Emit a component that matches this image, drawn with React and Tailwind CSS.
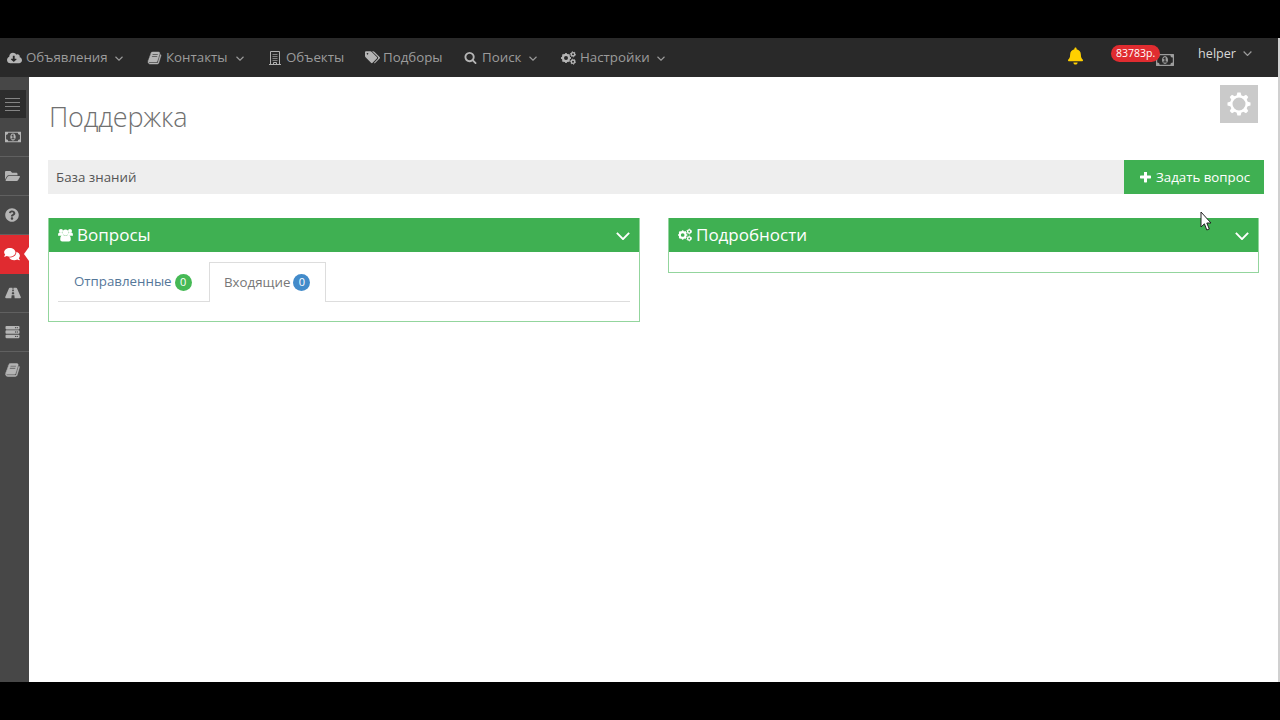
import React from "react";
import {
  FaCloudDownloadAlt,
  FaBell,
  FaFolderOpen,
  FaQuestionCircle,
  FaComments,
  FaRoad,
  FaServer,
} from "react-icons/fa";

function Chevron({ className }) {
  return (
    <svg viewBox="0 0 16 9" fill="none" stroke="currentColor" className={className}>
      <path d="M1 1l7 7 7-7" strokeWidth="2.200" />
    </svg>
  );
}

function Book({ className }) {
  return (
    <svg viewBox="0 0 1792 1792" fill="currentColor" stroke="currentColor" strokeWidth="60" className={className}>
      <path d="M1703 478q40 57 18 129l-275 906q-19 64-76.5 107.5t-122.5 43.5h-923q-77 0-148.5-53.5t-99.5-131.5q-24-67-2-127 0-4 3-27t4-37q1-8-3-21.5t-3-19.5q2-11 8-21t16.5-23.5 16.5-23.5q23-38 45-91.5t30-91.5q3-10 .5-30t-.5-28q3-11 17-28t17-23q21-36 42-92t25-90q1-9-2.5-32t.5-28q4-13 22-30.5t22-22.5q19-26 42.5-84.5t27.5-96.5q1-8-3-25.5t-2-26.5q2-8 9-18t18-23 17-21q8-12 16.5-30.5t15-35 16-36 19.5-32 26.5-23.5 36-11.5 47.5 5.5l-1 3q38-9 51-9h761q74 0 114 56t18 130l-274 906q-36 119-71.5 153.5t-128.5 34.5h-869q-27 0-38 15-11 16-1 43 24 70 144 70h923q29 0 56-15.5t35-41.5l300-987q7-22 5-57 38 15 59 43zm-1064 2q-4 13 2 22.5t20 9.5h608q13 0 25.5-9.5t16.5-22.5l21-64q4-13-2-22.5t-20-9.5h-608q-13 0-25.5 9.5t-16.5 22.5zm-83 256q-4 13 2 22.5t20 9.5h608q13 0 25.5-9.5t16.5-22.5l21-64q4-13-2-22.5t-20-9.5h-608q-13 0-25.5 9.5t-16.5 22.5z" />
    </svg>
  );
}

function Money({ className }) {
  return (
    <svg viewBox="0 256 1920 1280" fill="currentColor" className={className}>
      <path d="M768 1152h384v-96h-128v-448h-114l-148 137 77 80q42-37 55-57h2v288h-128v96zm512-256q0 70-21 142t-59.5 134-101.5 101-138 39-138-39-101.5-101-59.5-134-21-142 21-142 59.5-134 101.5-101 138-39 138 39 101.5 101 59.5 134 21 142zm512 256v-512q-106 0-181-75t-75-181h-1152q0 106-75 181t-181 75v512q106 0 181 75t75 181h1152q0-106 75-181t181-75zm128-832v1152q0 26-19 45t-45 19h-1792q-26 0-45-19t-19-45v-1152q0-26 19-45t45-19h1792q26 0 45 19t19 45z" />
    </svg>
  );
}

function Search({ className }) {
  return (
    <svg viewBox="64 128 1664 1664" fill="currentColor" className={className}>
      <path d="M1216 832q0-185-131.500-316.500t-316.500-131.500-316.500 131.500-131.500 316.500 131.500 316.500 316.500 131.500 316.500-131.500 131.500-316.500zm512 832q0 52-38 90t-90 38q-54 0-90-38l-343-342q-179 124-399 124-143 0-273.500-55.500t-225-150-150-225-55.500-273.500 55.500-273.500 150-225 225-150 273.500-55.500 273.500 55.500 225 150 150 225 55.500 273.500q0 220-124 399l343 343q37 37 37 90z" />
    </svg>
  );
}

function Building({ className }) {
  return (
    <svg viewBox="0 0 12 14" fill="none" stroke="currentColor" className={className}>
      <path d="M1.500 .5h9v13h-9z" />
      <path d="M3.500 3.500h5M3.500 5.500h5M3.500 7.500h5M3.500 9.500h5" strokeOpacity="0.650" />
      <path d="M0 13.500h12M4.500 13.500v-2h3v2" />
    </svg>
  );
}

function Tags({ className }) {
  return (
    <svg viewBox="0 0 15 13" fill="currentColor" className={className}>
      <path
        fillRule="evenodd"
        d="M0 1.200Q0 .3 1 .3h4.300q.8 0 1.500.6l5 5q.8.8 0 1.600l-4.200 4.300q-.8.800-1.600 0L.8 6.600Q0 5.900 0 5zM2.500 1.900a.8.8 0 1 0 .01 0z"
      />
      <path d="M7 .3h1.100q.8 0 1.500.6l5 5q.8.800 0 1.600l-4.200 4.300q-.7.700-1.500.1l3.800-4q1-1.100 0-2.100z" />
    </svg>
  );
}

function Cogs({ className }) {
  return (
    <svg viewBox="0 0 15 14" fill="none" stroke="currentColor" className={className}>
      <circle cx="5" cy="7" r="3.100" strokeWidth="2.200" />
      <circle cx="5" cy="7" r="4.300" strokeWidth="1.400" pathLength="16" strokeDasharray="1 1" strokeDashoffset="0.500" />
      <circle cx="12" cy="3.300" r="1.700" strokeWidth="1.400" />
      <circle cx="12" cy="3.300" r="2.500" strokeWidth="1" pathLength="12" strokeDasharray="1 1" />
      <circle cx="12" cy="10.700" r="1.700" strokeWidth="1.400" />
      <circle cx="12" cy="10.700" r="2.500" strokeWidth="1" pathLength="12" strokeDasharray="1 1" />
    </svg>
  );
}

function Group({ className }) {
  return (
    <svg viewBox="0 0 15 14" fill="currentColor" className={className}>
      <circle cx="3" cy="2.900" r="2" />
      <circle cx="12" cy="2.900" r="2" />
      <circle cx="7.500" cy="4.500" r="2.900" />
      <path d="M0 7.200Q0 4.400 1.400 4.400l3.200.3 1 3H1.200Q0 7.800 0 7.200zM15 7.200Q15 4.400 13.600 4.400l-3.200.3-1 3h4.400q1.200.1 1.200-.5z" />
      <path d="M2.200 11.500q0-4.600 2.700-4.600 2.600 1.300 5.200 0 2.700 0 2.700 4.600 0 2-2 2H4.200q-2 0-2-2z" />
    </svg>
  );
}

function Plus({ className }) {
  return (
    <svg viewBox="192 192 1408 1408" fill="currentColor" className={className}>
      <path d="M1600 736v192q0 40-28 68t-68 28h-416v416q0 40-28 68t-68 28h-192q-40 0-68-28t-28-68v-416h-416q-40 0-68-28t-28-68v-192q0-40 28-68t68-28h416v-416q0-40 28-68t68-28h192q40 0 68 28t28 68v416h416q40 0 68 28t28 68z" />
    </svg>
  );
}

function Gear({ className }) {
  const angles = [0, 45, 90, 135, 180, 225, 270, 315];
  return (
    <svg viewBox="-12 -12 24 24" className={className}>
      {angles.map((a) => (
        <path key={a} d="M-2.800-7l1.200-4.500h3.200l1.200 4.500z" fill="white" transform={`rotate(${a})`} />
      ))}
      <circle r="7.700" fill="none" stroke="white" strokeWidth="2.400" />
    </svg>
  );
}

function NavItem({ icon, label, chevron, className }) {
  return (
    <a className={`flex shrink-0 items-center ${className}`}>
      {icon}
      <span className="whitespace-nowrap">{label}</span>
      {chevron && <Chevron className="mt-px ml-auto h-[5px] w-2" />}
    </a>
  );
}

function SideItem({ children, last }) {
  return (
    <li className={`flex h-[39px] shrink-0 items-center pl-[5px] ${last ? "pb-1" : "border-b border-[#606060] pb-px"}`}>
      {children}
    </li>
  );
}

function PanelHeader({ icon, title }) {
  return (
    <header className="flex h-[34px] items-center bg-[#3fb052] px-[9px] pb-px text-white">
      {icon}
      <h2 className="text-[17px] leading-6">{title}</h2>
      <Chevron className="mt-[3px] ml-auto h-2 w-3.5" />
    </header>
  );
}

export default function App() {
  return (
    <div className="relative flex h-[720px] w-[1280px] flex-col overflow-hidden bg-black py-[38px] font-['Open_Sans',sans-serif]">
      <div className="flex min-h-0 flex-1 flex-col border-r-2 border-[#d0d0d0] bg-white">
        <nav className="flex h-[39px] shrink-0 items-center bg-[#292929] pl-[7px] text-[13.300px] text-[#9c9c9c]">
          <NavItem
            className="w-[116px]"
            icon={<FaCloudDownloadAlt className="mr-1 h-3.5 w-[15px] text-[#b5b5b5]" />}
            label="Объявления"
            chevron
          />
          <NavItem
            className="ml-6 w-[97px]"
            icon={<Book className="mr-1 h-3.5 w-[15px] text-[#b5b5b5]" />}
            label="Контакты"
            chevron
          />
          <NavItem
            className="ml-[25px] w-[76px]"
            icon={<Building className="mr-[5px] h-3.5 w-3 shrink-0 text-[#b0b0b0]" />}
            label="Объекты"
          />
          <NavItem
            className="ml-5 w-[79px]"
            icon={<Tags className="mr-[3px] h-[13px] w-[15px] shrink-0 text-[#b5b5b5]" />}
            label="Подборы"
          />
          <NavItem
            className="ml-5 w-[73px]"
            icon={<Search className="mr-[5px] h-3 w-[13px] text-[#b5b5b5]" />}
            label="Поиск"
            chevron
          />
          <NavItem
            className="ml-6 w-[104px]"
            icon={<Cogs className="mr-1 h-3.5 w-[15px] text-[#b5b5b5]" />}
            label="Настройки"
            chevron
          />
          <div className="ml-auto flex h-full items-start pt-[7px] pr-[26px]">
            <FaBell className="mt-0.5 h-[18px] w-[15px] text-[#ffd000]" />
            <div className="relative ml-7 h-[22px] w-[63px]">
              <Money className="absolute top-[9px] right-0 h-3 w-[18px]" />
              <span className="absolute top-0 left-0 flex h-[17px] w-[49px] items-center justify-center rounded-full bg-[#e02c30] text-[10.500px] text-white">
                83783р.
              </span>
            </div>
            <span className="ml-6 text-[12.600px] leading-[18px] text-[#d8d8d8]">helper</span>
            <Chevron className="mt-1.5 ml-[7px] h-[5px] w-[9px]" />
          </div>
        </nav>
        <div className="flex min-h-0 flex-1">
          <aside className="w-[29px] shrink-0 bg-[#474747] pt-[13px] text-[#b5b5b5]">
            <button className="flex h-7 w-[26px] flex-col justify-center gap-[3px] bg-[#2d2d2d] pl-[5px]">
              <span className="h-px w-[15px] bg-[#858585]" />
              <span className="h-px w-[15px] bg-[#858585]" />
              <span className="h-px w-[15px] bg-[#858585]" />
              <span className="h-px w-[15px] bg-[#858585]" />
            </button>
            <ul className="flex flex-col">
              <SideItem>
                <Money className="h-3 w-4" />
              </SideItem>
              <SideItem>
                <FaFolderOpen className="h-3.5 w-[15px]" />
              </SideItem>
              <SideItem>
                <FaQuestionCircle className="h-3.5 w-3.5" />
              </SideItem>
              <li className="relative flex h-[39px] items-center bg-[#e02b30] pb-0.5 pl-1">
                <FaComments className="h-3.5 w-4 text-white" />
                <svg viewBox="0 0 5 14" className="absolute top-3 right-0 h-3.5 w-[5px]">
                  <path d="M5 0L0 7l5 7z" fill="white" />
                </svg>
              </li>
              <SideItem>
                <FaRoad className="h-3.5 w-4" />
              </SideItem>
              <SideItem>
                <FaServer className="h-3.5 w-[15px]" />
              </SideItem>
              <SideItem last>
                <Book className="h-4 w-[15px]" />
              </SideItem>
            </ul>
          </aside>
          <main className="flex min-w-0 flex-1 flex-col pt-2 pr-3.5 pl-[19px]">
            <div className="flex h-[75px] items-start justify-between pr-1.5">
              <h1 className="pt-3 pl-px text-[27px] leading-10 font-light tracking-[-0.200px] text-[#707070]">Поддержка</h1>
              <button className="flex h-[38px] w-[38px] items-center justify-center bg-[#cacaca]">
                <Gear className="h-6 w-6" />
              </button>
            </div>
            <div className="flex h-[34px] items-stretch justify-between bg-[#eeeeee]">
              <span className="self-center pt-px pl-2 text-[13.300px] text-[#555]">База знаний</span>
              <button className="flex w-[140px] items-center bg-[#3fb052] pt-px pl-4 text-[13.300px] text-white">
                <Plus className="mr-[5px] h-[11px] w-[11px]" />
                <span className="whitespace-nowrap">Задать вопрос</span>
              </button>
            </div>
            <div className="mt-6 flex items-start gap-7">
              <section className="h-[104px] w-[592px] border border-t-0 border-[#93d59d]">
                <PanelHeader icon={<Group className="mt-px mr-1 h-3.5 w-[15px]" />} title="Вопросы" />
                <div className="mx-[9px] mt-2.5 flex h-10 items-end border-b border-[#ddd] text-[13.300px]">
                  <a className="flex h-10 w-[151px] items-center pt-0.5 pl-4 text-[#557799]">
                    Отправленные
                    <span className="ml-[3px] flex h-[17px] w-[17px] items-center justify-center rounded-full bg-[#45b955] text-[11px] text-white">
                      0
                    </span>
                  </a>
                  <a className="-mb-px flex h-10 w-[117px] items-center border border-b-0 border-[#ddd] bg-white pl-3.5 text-[#777]">
                    Входящие
                    <span className="ml-[3px] flex h-[17px] w-[17px] items-center justify-center rounded-full bg-[#428bca] text-[11px] text-white">
                      0
                    </span>
                  </a>
                </div>
              </section>
              <section className="h-[55px] w-[591px] border border-t-0 border-[#93d59d]">
                <PanelHeader icon={<Cogs className="mt-px mr-1 h-3.5 w-[14px]" />} title="Подробности" />
              </section>
            </div>
          </main>
        </div>
      </div>
      <svg viewBox="0 0 12 20" className="absolute top-[211px] left-[1200px] h-5 w-3">
        <path
          d="M1 1v15l3.400-3.200L6.800 19l2.500-1-2.500-6H11z"
          fill="white"
          stroke="#222"
          strokeWidth="1"
        />
      </svg>
    </div>
  );
}
